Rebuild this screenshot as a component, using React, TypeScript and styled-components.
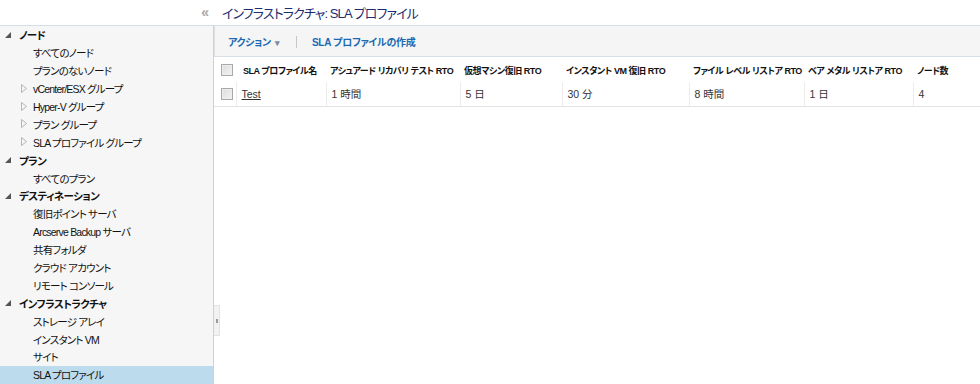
import React from "react";
import styled, { createGlobalStyle } from "styled-components";

type NavItem = {
  label: string;
  level: 0 | 1;
  expandable?: boolean;
  selected?: boolean;
};

const nav: NavItem[] = [
  { label: "ノード", level: 0 },
  { label: "すべてのノード", level: 1 },
  { label: "プランのないノード", level: 1 },
  { label: "vCenter/ESX グループ", level: 1, expandable: true },
  { label: "Hyper-V グループ", level: 1, expandable: true },
  { label: "プラン グループ", level: 1, expandable: true },
  { label: "SLA プロファイル グループ", level: 1, expandable: true },
  { label: "プラン", level: 0 },
  { label: "すべてのプラン", level: 1 },
  { label: "デスティネーション", level: 0 },
  { label: "復旧ポイント サーバ", level: 1 },
  { label: "Arcserve Backup サーバ", level: 1 },
  { label: "共有フォルダ", level: 1 },
  { label: "クラウド アカウント", level: 1 },
  { label: "リモート コンソール", level: 1 },
  { label: "インフラストラクチャ", level: 0 },
  { label: "ストレージ アレイ", level: 1 },
  { label: "インスタント VM", level: 1 },
  { label: "サイト", level: 1 },
  { label: "SLA プロファイル", level: 1, selected: true },
];

const columns = [
  { title: "SLA プロファイル名", width: 90 },
  { title: "アシュアード リカバリ テスト RTO", width: 134 },
  { title: "仮想マシン復旧 RTO", width: 102 },
  { title: "インスタント VM 復旧 RTO", width: 127 },
  { title: "ファイル レベル リストア RTO", width: 115 },
  { title: "ベア メタル リストア RTO", width: 109 },
  { title: "ノード数", width: 67 },
];

const rows = [["Test", "1 時間", "5 日", "30 分", "8 時間", "1 日", "4"]];

export default function App() {
  return (
    <>
      <GlobalStyle />
      <Page>
        <TopBar>
          <CollapseCell>
            <CollapseIcon>«</CollapseIcon>
          </CollapseCell>
          <Title>インフラストラクチャ: SLA プロファイル</Title>
        </TopBar>
        <Body>
          <Sidebar>
            {nav.map((item) => (
              <NavRow key={item.label} $level={item.level} $selected={!!item.selected}>
                {item.level === 0 && (
                  <Arrow width="6" height="6" viewBox="0 0 6 6">
                    <path d="M6 0 L6 6 L0 6 Z" fill="#555" />
                  </Arrow>
                )}
                {item.expandable && (
                  <SubArrow width="6" height="9" viewBox="0 0 6 9">
                    <path d="M0.5 0.5 L5.5 4.5 L0.5 8.5 Z" fill="none" stroke="#b5b5b5" />
                  </SubArrow>
                )}
                <NavLabel $bold={item.level === 0}>{item.label}</NavLabel>
              </NavRow>
            ))}
          </Sidebar>
          <Main>
            <Handle>
              <HandleDot />
            </Handle>
            <Toolbar>
              <ToolLink>
                アクション <Caret>▾</Caret>
              </ToolLink>
              <Divider />
              <ToolLink>SLA プロファイルの作成</ToolLink>
            </Toolbar>
            <Table>
              <thead>
                <tr>
                  <HeadCell style={{ width: 22 }}>
                    <CheckBox />
                  </HeadCell>
                  {columns.map((c) => (
                    <HeadCell key={c.title} style={{ width: c.width }}>
                      {c.title}
                    </HeadCell>
                  ))}
                </tr>
              </thead>
              <tbody>
                {rows.map((r) => (
                  <tr key={r[0]}>
                    <DataCell $first>
                      <CheckBox />
                    </DataCell>
                    {r.map((v, i) => (
                      <DataCell key={i}>{i === 0 ? <NameLink>{v}</NameLink> : v}</DataCell>
                    ))}
                  </tr>
                ))}
              </tbody>
            </Table>
          </Main>
        </Body>
      </Page>
    </>
  );
}

const GlobalStyle = createGlobalStyle`
  html, body {
    margin: 0;
    padding: 0;
    background: #fff;
  }
  body {
    font-family: "Liberation Sans", "Noto Sans CJK JP", sans-serif;
    font-feature-settings: "palt";
    color: #222;
  }
`;

const Page = styled.div`
  width: 980px;
  height: 384px;
  display: flex;
  flex-direction: column;
  overflow: hidden;
`;

const TopBar = styled.div`
  height: 25px;
  flex: none;
  display: flex;
  align-items: center;
  border-bottom: 1px solid #d5dde5;
  background: #fff;
`;

const CollapseCell = styled.div`
  width: 209px;
  display: flex;
  justify-content: flex-end;
`;

const CollapseIcon = styled.span`
  color: #a8a8a8;
  font-size: 14px;
  font-weight: bold;
  line-height: 1;
  margin-top: -2px;
`;

const Title = styled.div`
  margin-left: 13px;
  font-size: 13px;
  color: #1d2c6e;
  letter-spacing: -0.9px;
  white-space: nowrap;
`;

const Body = styled.div`
  flex: 1;
  display: flex;
  min-height: 0;
`;

const Sidebar = styled.div`
  width: 213px;
  flex: none;
  background: #f6f6f6;
  border-right: 1px solid #c8d3de;
  display: flex;
  flex-direction: column;
`;

const NavRow = styled.div<{ $level: 0 | 1; $selected: boolean }>`
  height: 17.9px;
  flex: none;
  display: flex;
  align-items: center;
  position: relative;
  padding-left: ${({ $level }) => ($level === 0 ? 19 : 33)}px;
  background: ${({ $selected }) => ($selected ? "#bcdcee" : "transparent")};
`;

const Arrow = styled.svg`
  position: absolute;
  left: 5px;
  top: 6px;
`;

const SubArrow = styled.svg`
  position: absolute;
  left: 21px;
  top: 4px;
`;

const NavLabel = styled.span<{ $bold: boolean }>`
  font-size: 10.5px;
  letter-spacing: ${({ $bold }) => ($bold ? -0.6 : -0.8)}px;
  font-weight: ${({ $bold }) => ($bold ? 700 : 400)};
  color: #111;
  white-space: nowrap;
`;

const Main = styled.div`
  flex: 1;
  position: relative;
  display: flex;
  flex-direction: column;
  background: #fff;
`;

const Handle = styled.div`
  position: absolute;
  left: 0;
  top: 279px;
  width: 5px;
  height: 29px;
  background: #f2f2f2;
  border: 1px solid #e3e3e3;
  border-left: none;
  display: flex;
  align-items: center;
  justify-content: center;
`;

const HandleDot = styled.div`
  width: 2px;
  height: 4px;
  background: #9a9a9a;
`;

const Toolbar = styled.div`
  height: 30px;
  flex: none;
  display: flex;
  align-items: center;
  padding-left: 13px;
  background: #f5f5f5;
  border-bottom: 1px solid #d8dfe6;
  border-left: 1px solid #e0e0e0;
`;

const ToolLink = styled.span`
  font-size: 10px;
  letter-spacing: -0.3px;
  font-weight: 700;
  color: #1b69b3;
  white-space: nowrap;
`;

const Caret = styled.span`
  font-size: 9px;
  color: #7a8aa0;
  margin-left: 2px;
`;

const Divider = styled.span`
  width: 1px;
  height: 12px;
  background: #c6c6c6;
  margin: 2px 15px 0 16px;
`;

const Table = styled.table`
  border-collapse: collapse;
  margin-top: 1px;
  table-layout: fixed;
  width: 766px;
`;

const HeadCell = styled.th`
  height: 24px;
  padding: 0 0 0 4px;
  text-align: left;
  font-size: 9px;
  letter-spacing: -0.45px;
  font-weight: 700;
  color: #111;
  white-space: nowrap;
  overflow: hidden;
  box-sizing: border-box;
  &:first-child {
    padding-left: 7px;
  }
  &:nth-child(2) {
    padding-left: 7px;
  }
`;

const DataCell = styled.td<{ $first?: boolean }>`
  height: 24px;
  padding: 0 0 0 ${({ $first }) => ($first ? 7 : 5)}px;
  font-size: 10.5px;
  color: #333;
  white-space: nowrap;
  border-bottom: 1px solid #e3e3e3;
  border-left: ${({ $first }) => ($first ? "none" : "1px solid #ececec")};
  box-sizing: border-box;
`;

const CheckBox = styled.span`
  display: block;
  width: 10px;
  height: 10px;
  border: 1px solid #a9a9a9;
  background: linear-gradient(135deg, #dcdcdc, #f4f4f4);
  box-shadow: inset 0 0 0 1px #eee;
`;

const NameLink = styled.span`
  color: #333;
  text-decoration: underline;
`;
